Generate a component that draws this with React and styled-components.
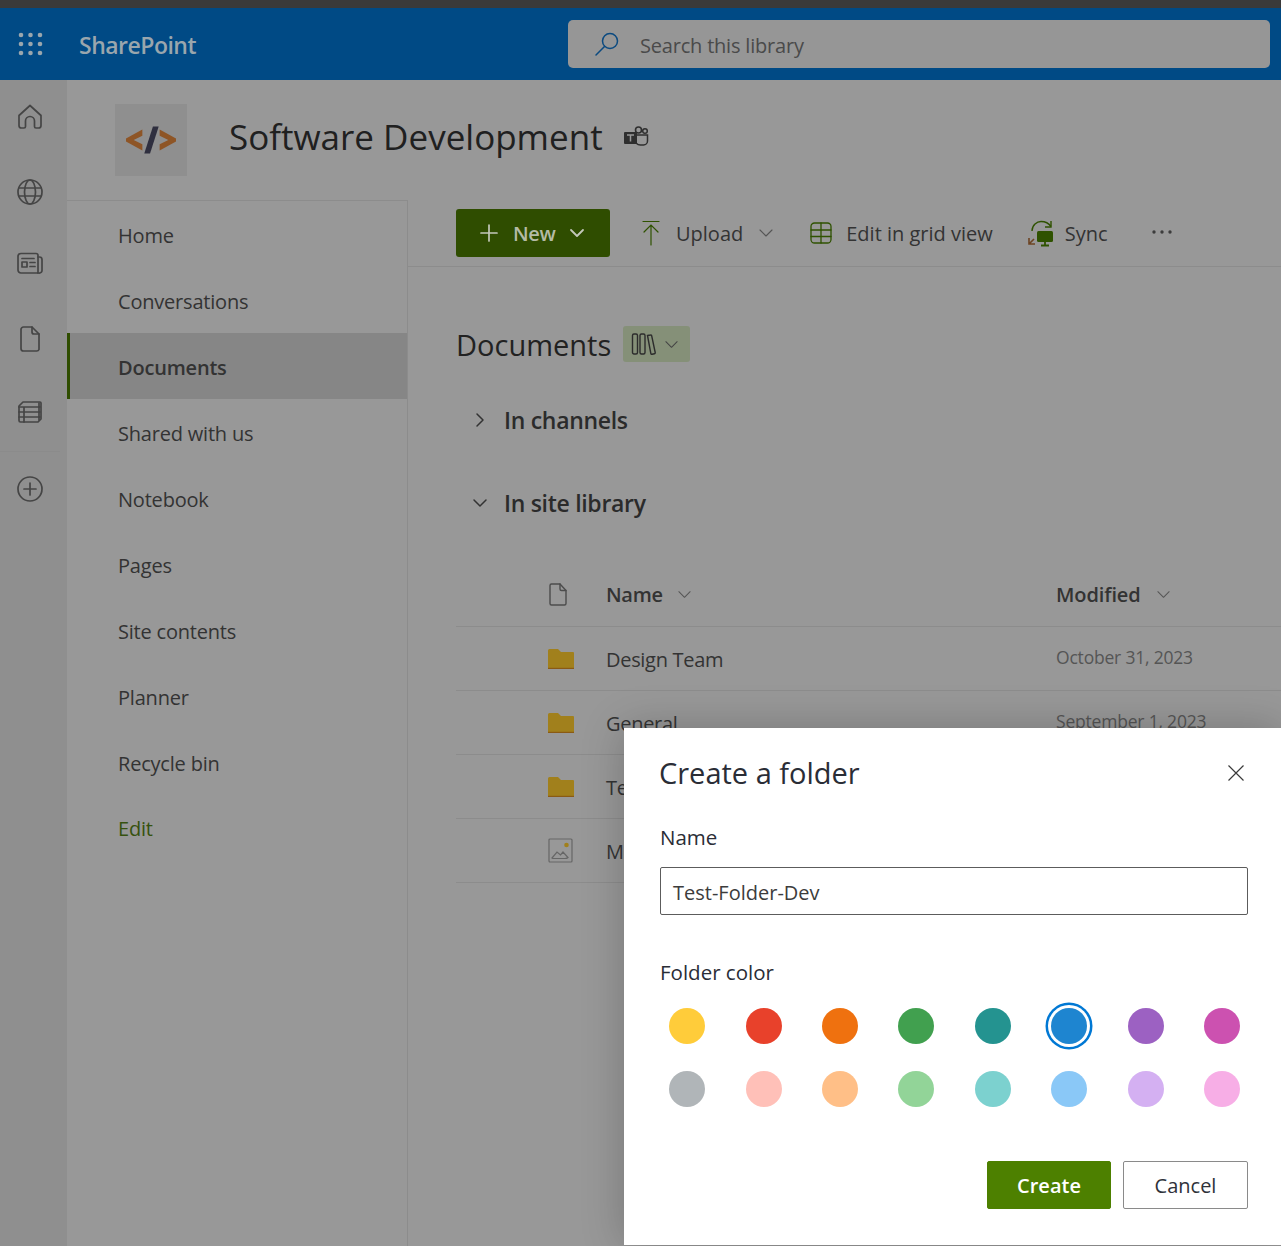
import React from 'react';
import styled, { createGlobalStyle } from 'styled-components';

const Global = createGlobalStyle`
  html, body { margin: 0; padding: 0; background: #989898; }
  body { font-family: "Open Sans", "Noto Sans", "Liberation Sans", sans-serif; }
  * { box-sizing: border-box; }
`;
const Page = styled.div`
  position: relative; width: 1281px; height: 1246px; overflow: hidden; background: #989898;
  display: flex; flex-direction: column; color: #262626;
`;
const TopStrip = styled.div`height: 8px; background: #3a3a3a; flex: none;`;
const SuiteBar = styled.header`
  height: 72px; flex: none; background: #004a85; display: flex; align-items: center;
`;
const Waffle = styled.div`width: 79px; padding-left: 18px; display: flex; align-items: center;`;
const Brand = styled.div`
  width: 489px; padding-top: 2px; font-size: 23px; font-weight: 600; letter-spacing: -0.5px; color: #9aa6ad;
`;
const SearchBox = styled.div`
  width: 702px; height: 48px; background: #969696; border-radius: 5px;
  display: flex; align-items: center; padding: 0 0 0 26px; gap: 20px;
  font-size: 20px; letter-spacing: -0.2px; color: #4a4a4a;
`;
const SearchLabel = styled.span`padding-top: 3px;`;
const Body = styled.div`flex: 1; display: flex; min-height: 0;`;
const Rail = styled.nav`
  width: 67px; flex: none; background: #8f8f8f; display: flex; flex-direction: column;
  align-items: center; padding: 1px 7px 0 0;
`;
const RailSlot = styled.div`
  height: 74px; width: 100%; display: flex; align-items: center; justify-content: center;
  color: #454545; padding-bottom: ${p => (p.$nudge || 0) * 2}px;
  ${p => p.$rule && 'border-top: 1px solid #8b8b8b;'}
`;
const Main = styled.div`flex: 1; display: flex; flex-direction: column; min-width: 0;`;
const SiteHeader = styled.div`
  height: 120px; flex: none; display: flex; align-items: center; padding-left: 48px;
`;
const Logo = styled.div`
  width: 72px; height: 72px; background: #8f8f8f; display: flex; align-items: center;
  justify-content: center; margin-right: 42px;
`;
const SiteTitle = styled.h1`
  margin: 0 0 8px; font-size: 35px; font-weight: 500; letter-spacing: 0; color: #202020;
`;
const TeamsMark = styled.span`margin: 0 0 6px 20px; display: flex;`;
const Split = styled.div`flex: 1; display: flex; min-height: 0;`;
const SideNav = styled.aside`
  width: 341px; flex: none; border-top: 1px solid #8c8c8c; border-right: 1px solid #8c8c8c;
`;
const NavItem = styled.div`
  height: 66px; display: flex; align-items: center; padding-left: ${p => p.$active ? 48 : 51}px;
  font-size: 20px; letter-spacing: -0.2px; padding-top: 2px;
  margin-top: ${p => p.$edit ? -1 : 0}px;
  font-weight: ${p => p.$active ? 600 : 400};
  color: ${p => p.$edit ? '#36520f' : '#333'};
  background: ${p => p.$active ? '#868686' : 'transparent'};
  border-left: ${p => p.$active ? '3px solid #2f4d00' : 'none'};
`;
const Content = styled.main`flex: 1; min-width: 0;`;
const CommandBar = styled.div`
  height: 66px; margin-top: 1px; border-bottom: 1px solid #8c8c8c; display: flex; align-items: center;
  padding: 0 0 2px 48px; font-size: 20px; letter-spacing: 0; color: #333;
`;
const NewButton = styled.button`
  width: 154px; height: 48px; background: #2f4d00; color: #b4bba6; border: 0; border-radius: 3px;
  display: flex; align-items: center; padding: 0 0 0 23px; font: inherit; font-weight: 600; letter-spacing: -0.3px;
`;
const NewLabel = styled.span`margin: 2px 13px 0 14px;`;
const CommandItem = styled.div`
  display: flex; align-items: center; margin-left: ${p => p.$ml}px; gap: ${p => p.$gap || 13}px;
`;
const CommandText = styled.span`padding-top: 2px;`;
const Library = styled.section`padding: 59px 0 0 48px;`;
const LibraryHead = styled.div`display: flex; align-items: center; height: 36px;`;
const LibraryTitle = styled.h2`
  margin: 0; font-size: 29px; font-weight: 500; letter-spacing: 0; color: #222;
`;
const ViewPill = styled.div`
  margin-left: 12px; width: 67px; height: 36px; background: #859078; border-radius: 3px;
  display: flex; align-items: center; padding-left: 8px; gap: 7px; color: #333;
`;
const Group = styled.div`
  height: ${p => p.$h}px; margin-top: ${p => p.$mt}px; display: flex; align-items: center; gap: 16px;
  padding-left: 16px; font-size: 23px; font-weight: 600; letter-spacing: -0.3px; color: #2b2b2b;
`;
const Table = styled.div`margin-top: 25px;`;
const Row = styled.div`
  height: 64px; display: flex; align-items: center; border-bottom: 1px solid #8c8c8c;
  font-size: 20px; letter-spacing: -0.3px; color: #333;
  font-weight: ${p => p.$head ? 600 : 400};
`;
const IconCell = styled.div`width: 150px; flex: none; padding-left: ${p => p.$pl}px; display: flex; align-items: center;`;
const NameCell = styled.div`
  width: 450px; flex: none; display: flex; align-items: center; gap: 14px;
  padding-top: ${p => p.$head ? 0 : 2}px;
`;
const DateCell = styled.div`
  font-size: 17.5px; letter-spacing: -0.2px; color: #555; margin-top: -4px;
`;
const HeadDate = styled.div`display: flex; align-items: center; gap: 15px; letter-spacing: -0.1px;`;
const Modal = styled.div`
  position: absolute; left: 624px; top: 728px; width: 657px; height: 517px; background: #fff;
  box-shadow: 0 0 40px rgba(0,0,0,.22); padding: 0 33px 0 36px; color: #2a2d36;
  display: flex; flex-direction: column;
`;
const ModalHead = styled.div`height: 90px; display: flex; align-items: center; justify-content: space-between; padding-right: 2px;`;
const ModalTitle = styled.h3`margin: 0 0 2px -1px; font-size: 29px; font-weight: 500; letter-spacing: 0;`;
const FieldLabel = styled.label`display: block; margin-top: 7px; font-size: 20.5px; font-weight: 500; line-height: 24px;`;
const NameInput = styled.div`
  height: 48px; margin-top: 18px; border: 1px solid #5c5c5c; border-radius: 2px; display: flex; align-items: center;
  padding: 2px 0 0 12px; font-size: 20px; letter-spacing: 0; color: #3c3c3c;
`;
const ColorLabel = styled(FieldLabel)`margin-top: 45px;`;
const SwatchGrid = styled.div`
  margin: 10px 0 0 -11px; width: 612px; display: grid; grid-template-columns: repeat(8, 76.4px); grid-auto-rows: 63px;
  justify-items: center; align-items: center;
`;
const Swatch = styled.div`
  width: 36px; height: 36px; border-radius: 50%; background: ${p => p.$c};
  ${p => p.$sel && 'box-shadow: 0 0 0 3px #fff, 0 0 0 5.5px #0078d4;'}
`;
const Actions = styled.div`margin-top: 41px; display: flex; justify-content: flex-end; gap: 12px;`;
const Btn = styled.button`
  height: 48px; width: ${p => p.$w}px; border-radius: 2px; font: inherit; font-size: 20px; letter-spacing: 0;
  font-weight: ${p => p.$primary ? 600 : 400};
  background: ${p => p.$primary ? '#4d8000' : '#fff'};
  color: ${p => p.$primary ? '#fff' : '#2f323a'};
  border: 1px solid ${p => p.$primary ? '#4d8000' : '#8a8a8a'};
`;

const Ico = ({ s = 26, vb = '0 0 26 26', children, w = 1.7, c = 'currentColor', style }) => (
  <svg width={s} height={s} viewBox={vb} fill="none" stroke={c} strokeWidth={w} strokeLinecap="round" strokeLinejoin="round" style={style}>{children}</svg>
);
const Chev = ({ s = 16, c = '#444', w = 1.3, dir = 'down' }) => (
  <svg width={s} height={s} viewBox="0 0 16 16" fill="none" stroke={c} strokeWidth={w} strokeLinecap="round" strokeLinejoin="round">
    {dir === 'down' ? <path d="M2 5l6 6 6-6" /> : <path d="M5 2l6 6-6 6" />}
  </svg>
);
const FolderIcon = () => (
  <svg width="26" height="20" viewBox="0 0 26 20">
    <path d="M0 1.500A1.500 1.500 0 0 1 1.500 0H10l3 3h12a1 1 0 0 1 1 1v15a1 1 0 0 1-1 1H1a1 1 0 0 1-1-1z" fill="#a1801c" />
    <rect x="0" y="18.800" width="26" height="1.200" fill="#8a5a14" />
  </svg>
);
const FileIcon = () => (
  <Ico s={26} vb="0 0 26 26" w={1.400} c="#4c4c4c"><path d="M5 3.500A1.500 1.500 0 0 1 6.500 2H15l6 6.500v13A1.500 1.500 0 0 1 19.500 23h-13A1.500 1.500 0 0 1 5 21.500z" /><path d="M15 2v5a1.500 1.500 0 0 0 1.500 1.500H21" /></Ico>
);

const navItems = ['Home', 'Conversations', 'Documents', 'Shared with us', 'Notebook', 'Pages', 'Site contents', 'Planner', 'Recycle bin', 'Edit'];
const rows = [
  { n: 'Design Team', d: 'October 31, 2023' },
  { n: 'General', d: 'September 1, 2023' },
  { n: 'Te', d: '' },
  { n: 'M', d: '', img: true },
];
const colors = ['#ffcc3a', '#e8412b', '#ef710f', '#41a04f', '#249390', '#1e85d0', '#9c61c2', '#cc51b0', '#b0b5b8', '#ffc0b8', '#ffbf87', '#92d498', '#7cd1cf', '#8ac8f7', '#d4b0f2', '#f7aee6'];

export default function App() {
  return (
    <Page>
      <Global />
      <TopStrip />
      <SuiteBar>
        <Waffle>
          <svg width="25" height="24" viewBox="0 0 25 24" fill="#9aa6ad">
            {[3, 12, 21].flatMap(y => [3, 12.500, 22].map(x => <circle key={x + '-' + y} cx={x} cy={y} r="2.300" />))}
          </svg>
        </Waffle>
        <Brand>SharePoint</Brand>
        <SearchBox>
          <svg width="26" height="26" viewBox="0 0 26 26" fill="none" stroke="#0b4a80" strokeWidth="1.500" strokeLinecap="round"><circle cx="16" cy="10" r="7.500" /><path d="M10.500 15.500L2 24" /></svg>
          <SearchLabel>Search this library</SearchLabel>
        </SearchBox>
      </SuiteBar>
      <Body>
        <Rail>
          <RailSlot $nudge={1}><Ico><path d="M2 11.500L13 1.500l11 10v10A2.500 2.500 0 0 1 21.500 24H19a1.500 1.500 0 0 1-1.500-1.500V17a4.500 4.500 0 0 0-9 0v5.500A1.500 1.500 0 0 1 7 24H4.500A2.500 2.500 0 0 1 2 21.500z" /></Ico></RailSlot>
          <RailSlot><Ico><circle cx="13" cy="13" r="12" /><ellipse cx="13" cy="13" rx="5.500" ry="12" /><path d="M2 9h22M2 17h22" /></Ico></RailSlot>
          <RailSlot $nudge={3}><Ico><path d="M4 3.500h15A2 2 0 0 1 21 5.500V23H4a3 3 0 0 1-3-3V6.500a3 3 0 0 1 3-3z" /><path d="M21 7h1.500A2.500 2.500 0 0 1 25 9.500v11A2.500 2.500 0 0 1 22 23h-1" /><rect x="5" y="12" width="5" height="5" /><path d="M5 8.500h12M13 12.500h5M13 16.500h5" /></Ico></RailSlot>
          <RailSlot $nudge={1}><Ico><path d="M4 3.500A2.500 2.500 0 0 1 6.500 1H15l7 7v15.500a2.500 2.500 0 0 1-2.500 1.500h-13A2.500 2.500 0 0 1 4 22.500z" /><path d="M15 1v5a2 2 0 0 0 2 2h5" /></Ico></RailSlot>
          <RailSlot $nudge={2}><Ico><path d="M2 7l4-4h17a1 1 0 0 1 1 1v16l-3 3H3.500A1.500 1.500 0 0 1 2 21.500z" /><path d="M2 8h21M2 13h21M2 18h21M7 8v15M22 4v17" /></Ico></RailSlot>
          <RailSlot $rule><Ico><circle cx="13" cy="13" r="12" /><path d="M13 7v12M7 13h12" /></Ico></RailSlot>
        </Rail>
        <Main>
          <SiteHeader>
            <Logo>
              <svg width="50" height="28" viewBox="0 0 52 28">
                <path d="M17 3v6.500L8 14l9 4.500V25L0 15.500v-3z" fill="#8e5526" />
                <path d="M35 3v6.500l9 4.500-9 4.500V25l17-9.500v-3z" fill="#8e5526" />
                <path d="M19 28L28 0h6l-9 28z" fill="#2f2f3f" />
              </svg>
            </Logo>
            <SiteTitle>Software Development</SiteTitle>
            <TeamsMark>
              <svg width="26" height="22" viewBox="0 0 26 22">
                <circle cx="15.500" cy="4" r="3" fill="none" stroke="#2f2f2f" strokeWidth="1.600" />
                <circle cx="22" cy="5" r="2.300" fill="none" stroke="#2f2f2f" strokeWidth="1.500" />
                <path d="M11 9h13.500v6a4 4 0 0 1-4 4h-3a6 6 0 0 1-6-6z" fill="none" stroke="#2f2f2f" strokeWidth="1.500" />
                <rect x="1" y="6" width="13" height="12" rx="1" fill="#2f2f2f" />
                <path d="M4 9h7M7.500 9v6.500" stroke="#999" strokeWidth="1.500" />
              </svg>
            </TeamsMark>
          </SiteHeader>
          <Split>
            <SideNav>
              {navItems.map(n => <NavItem key={n} $active={n === 'Documents'} $edit={n === 'Edit'}>{n}</NavItem>)}
            </SideNav>
            <Content>
              <CommandBar>
                <NewButton>
                  <Ico s={20} vb="0 0 20 20" w={1.700} c="#c4c8ba"><path d="M10 2v16M2 10h16" /></Ico>
                  <NewLabel>New</NewLabel>
                  <Chev c="#c4c8ba" w={1.800} />
                </NewButton>
                <CommandItem $ml={31} $gap={15}>
                  <svg width="20" height="26" viewBox="0 0 20 26" fill="none" stroke="#2f5200" strokeWidth="1.200" strokeLinecap="round"><path d="M2 1.500h16M10 25V5M3 12l7-7 7 7" /></svg>
                  <CommandText>Upload</CommandText>
                  <Chev c="#555" w={1.100} s={16} />
                </CommandItem>
                <CommandItem $ml={35} $gap={13}>
                  <Ico s={24} vb="0 0 24 24" w={1.300} c="#2f5200"><rect x="2" y="2" width="20" height="20" rx="3.500" /><path d="M2 9h20M2 15.500h20M12 2v20" /></Ico>
                  <CommandText>Edit in grid view</CommandText>
                </CommandItem>
                <CommandItem $ml={34} $gap={10}>
                  <svg width="28" height="28" viewBox="0 0 28 28" fill="none">
                    <path d="M5 12C5 6 10 2.500 14 2.500c5 0 8 2 10 5" stroke="#2f5200" strokeWidth="1.400" />
                    <path d="M24 2v6h-6" stroke="#2f5200" strokeWidth="1.400" />
                    <path d="M2 19v6h6M2 25l5-5" stroke="#6d4423" strokeWidth="1.600" />
                    <rect x="10" y="12" width="16" height="11" rx="1.500" fill="#2f5200" />
                    <path d="M18 23v3M14 26.500h8" stroke="#2f5200" strokeWidth="1.800" />
                  </svg>
                  <CommandText>Sync</CommandText>
                </CommandItem>
                <CommandItem $ml={43}>
                  <svg width="22" height="6" viewBox="0 0 22 6" fill="#3c3c3c" style={{ marginTop: -1 }}><circle cx="3" cy="3" r="1.700" /><circle cx="11" cy="3" r="1.700" /><circle cx="19" cy="3" r="1.700" /></svg>
                </CommandItem>
              </CommandBar>
              <Library>
                <LibraryHead>
                  <LibraryTitle>Documents</LibraryTitle>
                  <ViewPill>
                    <svg width="26" height="24" viewBox="0 0 26 24" fill="none" stroke="#2c2c2c" strokeWidth="1.400"><rect x="1.500" y="2" width="5" height="20" rx="1.500" /><rect x="9" y="2" width="5" height="20" rx="1.500" /><path d="M16.500 3.500l3-.5a1 1 0 0 1 1.200.8l3.500 16.700a1 1 0 0 1-.8 1.200l-2.400.5a1 1 0 0 1-1.200-.8z" /></svg>
                    <Chev c="#444" w={1.100} s={15} />
                  </ViewPill>
                </LibraryHead>
                <Group $mt={23} $h={70}><Chev dir="right" s={16} c="#333" w={1.500} />In channels</Group>
                <Group $mt={13} $h={70}><Chev s={16} c="#333" w={1.500} />In site library</Group>
                <Table>
                  <Row $head>
                    <IconCell $pl={89}><FileIcon /></IconCell>
                    <NameCell $head>Name <Chev c="#555" w={1.100} s={15} /></NameCell>
                    <HeadDate>Modified <Chev c="#555" w={1.100} s={15} /></HeadDate>
                  </Row>
                  {rows.map(r => (
                    <Row key={r.n}>
                      <IconCell $pl={r.img ? 91 : 92}>
                        {r.img ? (
                          <svg width="27" height="27" viewBox="0 0 27 27" fill="none" stroke="#666" strokeWidth="1.200"><rect x="2" y="2" width="23" height="23" rx="1" /><path d="M5 21l5-6 3.500 3 2.500-3 5 5.500c-1 1-2 1-3 1H7c-1 0-1.500 0-2-.5z" /><circle cx="19.500" cy="8" r="2.300" fill="#a1801c" stroke="none" /></svg>
                        ) : <FolderIcon />}
                      </IconCell>
                      <NameCell>{r.n}</NameCell>
                      <DateCell>{r.d}</DateCell>
                    </Row>
                  ))}
                </Table>
              </Library>
            </Content>
          </Split>
        </Main>
      </Body>
      <Modal>
        <ModalHead>
          <ModalTitle>Create a folder</ModalTitle>
          <svg width="20" height="20" viewBox="0 0 20 20" stroke="#3a3a3a" strokeWidth="1.200" fill="none"><path d="M2.500 2.500l15 15M17.500 2.500l-15 15" /></svg>
        </ModalHead>
        <FieldLabel>Name</FieldLabel>
        <NameInput>Test-Folder-Dev</NameInput>
        <ColorLabel>Folder color</ColorLabel>
        <SwatchGrid>
          {colors.map((c, i) => <Swatch key={c} $c={c} $sel={i === 5} />)}
        </SwatchGrid>
        <Actions>
          <Btn $primary $w={124}>Create</Btn>
          <Btn $w={125}>Cancel</Btn>
        </Actions>
      </Modal>
    </Page>
  );
}
